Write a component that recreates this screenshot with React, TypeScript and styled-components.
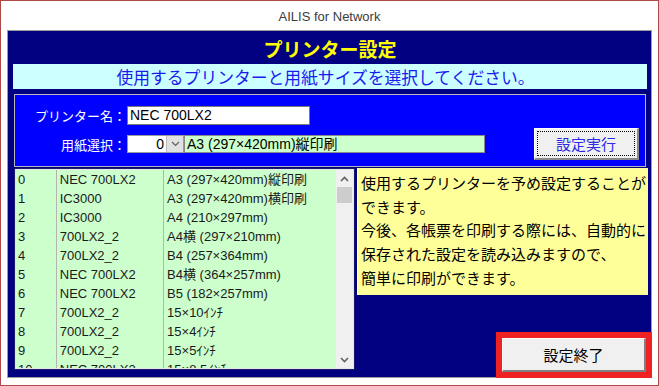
import styled, { createGlobalStyle } from "styled-components";

const GlobalStyle = createGlobalStyle`
  html, body { margin: 0; padding: 0; background: #fff; }
  body { font-family: "Liberation Sans", "Noto Sans CJK JP", sans-serif; }
`;

const rows = [
  ["0", "NEC 700LX2", "A3 (297×420mm)縦印刷"],
  ["1", "IC3000", "A3 (297×420mm)横印刷"],
  ["2", "IC3000", "A4 (210×297mm)"],
  ["3", "700LX2_2", "A4横 (297×210mm)"],
  ["4", "700LX2_2", "B4 (257×364mm)"],
  ["5", "NEC 700LX2", "B4横 (364×257mm)"],
  ["6", "NEC 700LX2", "B5 (182×257mm)"],
  ["7", "700LX2_2", "15×10ｲﾝﾁ"],
  ["8", "700LX2_2", "15×4ｲﾝﾁ"],
  ["9", "700LX2_2", "15×5ｲﾝﾁ"],
  ["10", "NEC 700LX2", "15×8.5ｲﾝﾁ"],
];

export default function App() {
  return (
    <Window>
      <GlobalStyle />
      <TitleBar>AILIS for Network</TitleBar>
      <Main>
        <Heading>プリンター設定</Heading>
        <Banner>使用するプリンターと用紙サイズを選択してください。</Banner>
        <Panel>
          <Fields>
            <Label>プリンター名：</Label>
            <TextInput>NEC 700LX2</TextInput>
            <Label>用紙選択：</Label>
            <ComboRow>
              <Combo>
                <ComboValue>0</ComboValue>
                <ComboArrow>
                  <svg width="9" height="6" viewBox="0 0 9 6">
                    <path d="M1 1 L4.5 4.5 L8 1" fill="none" stroke="#606060" strokeWidth="1.2" />
                  </svg>
                </ComboArrow>
              </Combo>
              <PaperField>A3 (297×420mm)縦印刷</PaperField>
            </ComboRow>
          </Fields>
          <RunButton>
            <FocusRect>設定実行</FocusRect>
          </RunButton>
        </Panel>
        <Bottom>
          <List>
            <Rows>
              {rows.map((r) => (
                <Row key={r[0]}>
                  <Cell $w={40}>{r[0]}</Cell>
                  <Cell $w={108} $line>{r[1]}</Cell>
                  <Cell $w={174} $line>{r[2]}</Cell>
                </Row>
              ))}
            </Rows>
            <ScrollBar>
              <ScrollArrow>
                <svg width="9" height="6" viewBox="0 0 9 6">
                  <path d="M1 5 L4.5 1.5 L8 5" fill="none" stroke="#606060" strokeWidth="1.6" />
                </svg>
              </ScrollArrow>
              <Thumb />
              <Track />
              <ScrollArrow>
                <svg width="9" height="6" viewBox="0 0 9 6">
                  <path d="M1 1 L4.5 4.5 L8 1" fill="none" stroke="#606060" strokeWidth="1.6" />
                </svg>
              </ScrollArrow>
            </ScrollBar>
          </List>
          <Side>
            <Info>
              使用するプリンターを予め設定することが
              <br />
              できます。
              <br />
              今後、各帳票を印刷する際には、自動的に
              <br />
              保存された設定を読み込みますので、
              <br />
              簡単に印刷ができます。
            </Info>
            <Highlight>
              <EndButton>設定終了</EndButton>
            </Highlight>
          </Side>
        </Bottom>
      </Main>
    </Window>
  );
}

const Window = styled.div`
  width: 659px;
  height: 386px;
  box-sizing: border-box;
  border: 1px solid #b04848;
  background: #fff;
  display: flex;
  flex-direction: column;
`;

const TitleBar = styled.div`
  height: 29px;
  display: flex;
  align-items: center;
  justify-content: center;
  font-size: 13px;
  color: #3c3c3c;
  padding-top: 2px;
  box-sizing: border-box;
`;

const Main = styled.div`
  margin: 0 6px;
  height: 348px;
  box-sizing: border-box;
  border: 1px solid #9a9a9a;
  background: #000080;
  padding: 0 4px 0 5px;
  display: flex;
  flex-direction: column;
`;

const Heading = styled.div`
  height: 33px;
  display: flex;
  align-items: center;
  justify-content: center;
  color: #ffff00;
  font-weight: bold;
  font-size: 19px;
  font-family: "Noto Sans CJK JP", sans-serif;
  padding-top: 2px;
  box-sizing: border-box;
`;

const Banner = styled.div`
  height: 25px;
  background: #ccffff;
  color: #1a1aee;
  font-size: 16.8px;
  font-family: "Noto Sans CJK JP", sans-serif;
  display: flex;
  align-items: center;
  justify-content: center;
  padding-right: 9px;
`;

const Panel = styled.div`
  margin: 5px 1px 0 1px;
  height: 73px;
  box-sizing: border-box;
  border: 1px solid #b8b8b8;
  background: #0000ff;
  display: flex;
  justify-content: space-between;
  padding: 11px 6px 0 0;
`;

const Fields = styled.div`
  display: grid;
  grid-template-columns: 112px auto;
  grid-template-rows: 19px 18px;
  row-gap: 10px;
  align-items: center;
`;

const Label = styled.div`
  color: #fff;
  font-size: 13px;
  font-family: "Noto Sans CJK JP", sans-serif;
  text-align: right;
  padding-right: 1px;
`;

const TextInput = styled.div`
  width: 183px;
  height: 19px;
  box-sizing: border-box;
  border: 1px solid #7a7a7a;
  background: #fff;
  font-size: 14px;
  line-height: 17px;
  padding-left: 2px;
  color: #000;
`;

const ComboRow = styled.div`
  display: flex;
  height: 18px;
`;

const Combo = styled.div`
  width: 57px;
  box-sizing: border-box;
  border: 1px solid #9a9a9a;
  background: #fff;
  display: flex;
`;

const ComboValue = styled.div`
  flex: 1;
  text-align: right;
  font-size: 14px;
  line-height: 16px;
  padding-right: 2px;
`;

const ComboArrow = styled.div`
  width: 16px;
  background: #e1e1e1;
  border-left: 1px solid #bcbcbc;
  display: flex;
  align-items: center;
  justify-content: center;
`;

const PaperField = styled.div`
  width: 301px;
  box-sizing: border-box;
  border: 1px solid #8a8a8a;
  background: #ccffcc;
  font-size: 14px;
  line-height: 16px;
  padding-left: 2px;
`;

const RunButton = styled.div`
  margin-top: 22px;
  width: 105px;
  height: 32px;
  box-sizing: border-box;
  background: #f0f0f0;
  border-top: 1px solid #fff;
  border-left: 1px solid #fff;
  border-right: 2px solid #8a8a8a;
  border-bottom: 2px solid #8a8a8a;
  padding: 2px;
`;

const FocusRect = styled.div`
  height: 100%;
  box-sizing: border-box;
  border: 1px dotted #000;
  display: flex;
  align-items: center;
  justify-content: center;
  color: #2a2ae8;
  font-size: 15px;
  font-family: "Noto Sans CJK JP", sans-serif;
`;

const Bottom = styled.div`
  margin: 1px 0 0 1px;
  flex: 1;
  display: flex;
  gap: 2px;
`;

const List = styled.div`
  width: 341px;
  height: 202px;
  box-sizing: border-box;
  border: 1px solid #1a1a70;
  outline: 1px solid #e6e6e6;
  outline-offset: -2px;
  background: #ccffcc;
  display: flex;
  overflow: hidden;
  padding: 1px;
`;

const Rows = styled.div`
  flex: 1;
  overflow: hidden;
`;

const Row = styled.div`
  display: flex;
  height: 19px;
`;

const Cell = styled.div<{ $w: number; $line?: boolean }>`
  width: ${(p) => p.$w}px;
  box-sizing: border-box;
  padding-left: ${(p) => (p.$line ? 3 : 2)}px;
  border-left: ${(p) => (p.$line ? "1px solid #b4b4b4" : "none")};
  font-size: 13px;
  line-height: 19px;
  color: #1a1a1a;
  white-space: nowrap;
  overflow: hidden;
`;

const ScrollBar = styled.div`
  width: 17px;
  background: #f0f0f0;
  display: flex;
  flex-direction: column;
  align-items: center;
`;

const ScrollArrow = styled.div`
  height: 17px;
  width: 100%;
  display: flex;
  align-items: center;
  justify-content: center;
`;

const Thumb = styled.div`
  width: 15px;
  height: 16px;
  background: #cdcdcd;
`;

const Track = styled.div`
  flex: 1;
`;

const Side = styled.div`
  flex: 1;
  display: flex;
  flex-direction: column;
  align-items: flex-end;
`;

const Info = styled.div`
  align-self: stretch;
  height: 127px;
  box-sizing: border-box;
  margin-right: -1px;
  background: #ffff99;
  border-left: 1px solid #fff;
  padding: 3px 0 0 3px;
  font-size: 15px;
  line-height: 23.7px;
  color: #000;
  white-space: nowrap;
  font-family: "Noto Sans CJK JP", sans-serif;
`;

const Highlight = styled.div`
  margin-top: auto;
  margin-right: -5px;
  margin-bottom: -1px;
  width: 156px;
  height: 46px;
  box-sizing: border-box;
  border: 6px solid #ee2222;
`;

const EndButton = styled.div`
  height: 100%;
  width: 144px;
  box-sizing: border-box;
  background: #f0f0f0;
  border-top: 1px solid #fff;
  border-left: 1px solid #fff;
  border-right: 2px solid #808080;
  border-bottom: 2px solid #808080;
  display: flex;
  align-items: center;
  justify-content: center;
  color: #000;
  font-size: 15px;
  font-family: "Noto Sans CJK JP", sans-serif;
`;
